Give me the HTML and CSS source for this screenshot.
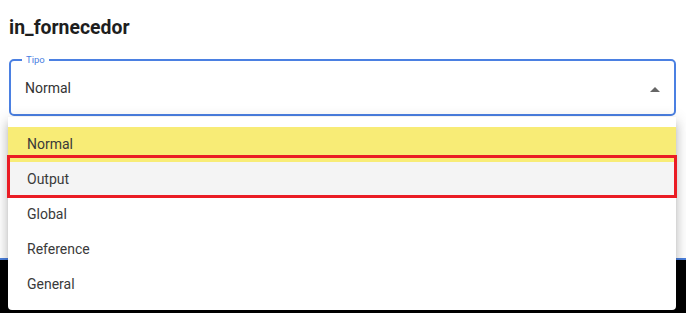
FILE: index.html
```html
<!DOCTYPE html>
<html lang="pt">
<head>
<meta charset="utf-8">
<title>in_fornecedor</title>
<link rel="stylesheet" href="styles.css">
</head>
<body>
<div class="page">
  <section class="panel">
    <h1 class="title">in_fornecedor</h1>
    <div class="field">
      <span class="legend">Tipo</span>
      <span class="value">Normal</span>
      <svg class="arrow" viewBox="0 0 10 5" width="10" height="5" aria-hidden="true"><path d="M0 5 L5 0 L10 5 Z" fill="#666"/></svg>
    </div>
  </section>
  <div class="bar"></div>
  <ul class="menu">
    <li class="item selected">Normal</li>
    <li class="item hover">Output</li>
    <li class="item">Global</li>
    <li class="item">Reference</li>
    <li class="item">General</li>
  </ul>
  <div class="mark"></div>
</div>
</body>
</html>
```
FILE: styles.css
```css
html, body {
  margin: 0;
  padding: 0;
}
body {
  font-family: Roboto, "Liberation Sans", Arial, sans-serif;
  background: #000;
}
.page {
  position: relative;
  width: 686px;
  height: 313px;
  overflow: hidden;
  display: flex;
  flex-direction: column;
}
.panel {
  background: #fff;
  height: 258px;
  padding: 0 10px 0 9px;
  box-sizing: border-box;
}
.title {
  margin: 0;
  padding-top: 15px;
  font-size: 19.4px;
  font-weight: 700;
  line-height: 26px;
  color: #1e1e1e;
}
.field {
  position: relative;
  margin-top: 18px;
  height: 57px;
  box-sizing: border-box;
  border: 2px solid #4b80e2;
  border-radius: 5px;
  display: flex;
  align-items: center;
  padding: 0 14px 0 14px;
}
.legend {
  position: absolute;
  top: -7px;
  left: 11px;
  padding: 0 4px;
  background: #fff;
  font-size: 9.5px;
  line-height: 11px;
  color: #4b80e2;
}
.value {
  flex: 1;
  font-size: 14px;
  color: #333;
}
.arrow {
  display: block;
  margin-top: 3px;
}
.bar {
  height: 2px;
  background: #4b7fdc;
}
.menu {
  position: absolute;
  left: 8px;
  top: 117px;
  width: 668px;
  height: 193px;
  box-sizing: border-box;
  margin: 0;
  padding: 10px 0 8px;
  list-style: none;
  background: #fff;
  border-radius: 0 0 4px 4px;
  box-shadow: 0 5px 5px -3px rgba(0,0,0,.2), 0 8px 10px 1px rgba(0,0,0,.14), 0 3px 14px 2px rgba(0,0,0,.12);
}
.item {
  height: 35px;
  line-height: 35px;
  padding-left: 19px;
  font-size: 14px;
  color: #3a3a3a;
}
.item.selected {
  background: #f8ec76;
}
.item.hover {
  background: #f4f4f4;
}
.mark {
  position: absolute;
  left: 7px;
  top: 155px;
  width: 670px;
  height: 43px;
  box-sizing: border-box;
  border: 3px solid #ea1c24;
}
```
